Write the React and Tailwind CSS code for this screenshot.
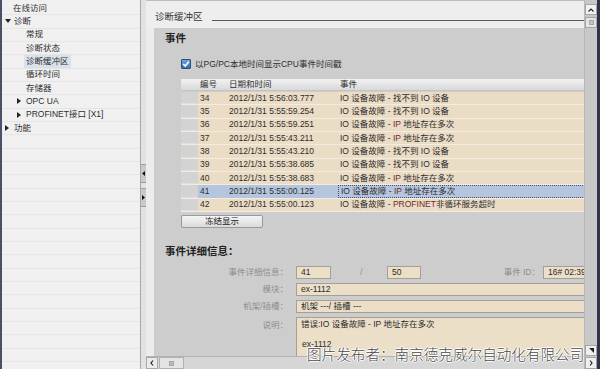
import React from "react";

const TREE = [
  { label: "在线访问", pl: 11 },
  { label: "诊断", pl: 3, arrow: "down" },
  { label: "常规", pl: 24 },
  { label: "诊断状态", pl: 24 },
  { label: "诊断缓冲区", pl: 24, active: true },
  { label: "循环时间", pl: 24 },
  { label: "存储器", pl: 24 },
  { label: "OPC UA", pl: 15, arrow: "right" },
  { label: "PROFINET接口 [X1]", pl: 15, arrow: "right" },
  { label: "功能", pl: 3, arrow: "right" },
];

const EVENTS = [
  { id: 34, time: "2012/1/31 5:56:03.777", kind: "io" },
  { id: 35, time: "2012/1/31 5:55:59.254", kind: "io" },
  { id: 36, time: "2012/1/31 5:55:59.251", kind: "ip" },
  { id: 37, time: "2012/1/31 5:55:43.211", kind: "ip" },
  { id: 38, time: "2012/1/31 5:55:43.210", kind: "io" },
  { id: 39, time: "2012/1/31 5:55:38.685", kind: "io" },
  { id: 40, time: "2012/1/31 5:55:38.683", kind: "ip" },
  { id: 41, time: "2012/1/31 5:55:00.125", kind: "ip", selected: true },
  { id: 42, time: "2012/1/31 5:55:00.123", kind: "pn" },
];

const Arrow = ({ dir }) => (
  <span className="w-[9px] flex items-center">
    {dir === "down" ? (
      <svg width="6" height="4" viewBox="0 0 6 4"><polygon points="0,0 6,0 3,4" fill="#222" /></svg>
    ) : (
      <svg width="4" height="6" viewBox="0 0 4 6"><polygon points="0,0 4,3 0,6" fill="#222" /></svg>
    )}
  </span>
);

const EventText = ({ kind }) => (
  <span>
    IO 设备故障 -{" "}
    {kind === "io" && "找不到 IO 设备"}
    {kind === "ip" && (
      <>
        <span className="text-[#6b2b2b]">IP</span> 地址存在多次
      </>
    )}
    {kind === "pn" && (
      <>
        <span className="text-[#6b2b2b]">PROFINET</span>非循环服务超时
      </>
    )}
  </span>
);

const Field = ({ children, className = "" }) => (
  <div className={`h-[13px] bg-[#ecdfc8] border border-[#a3a09a] pl-[4px] flex items-center text-[#2b2b2b] ${className}`}>
    {children}
  </div>
);

const Label = ({ children }) => (
  <div className="w-[108px] text-right text-[#8e8e8e] pr-[1px]">{children}</div>
);

export default function App() {
  return (
    <div className="relative w-[600px] h-[369px] overflow-hidden flex font-['Liberation_Sans','Noto_Sans_CJK_SC',sans-serif] text-[8.5px] text-[#2e2e2e] bg-[#f0f0f0]">
      {/* left tree */}
      <div className="w-[140px] h-full border-l-2 border-[#4a5163] bg-[#f0f0f0] pt-[2px] flex flex-col overflow-hidden">
        {TREE.map((t) => (
          <div key={t.label} className="h-[13.33px] shrink-0 flex items-center border-b border-[#e5e5e5]" style={{ paddingLeft: t.pl }}>
            {t.arrow && <Arrow dir={t.arrow} />}
            <span className={t.active ? "bg-[#d9e1eb] px-[2px] -ml-[2px]" : ""}>{t.label}</span>
          </div>
        ))}
        {Array.from({ length: 18 }).map((_, i) => (
          <div key={i} className="h-[13.33px] shrink-0 border-b border-[#e5e5e5]" />
        ))}
      </div>

      {/* splitter */}
      <div className="w-[6px] h-full bg-[#e2e2e2] border-l border-[#a8a8a8] flex flex-col items-center">
        <div className="mt-[164px] w-[5px] h-[19px] bg-[#c9c9c9] border-y border-[#9d9d9d] flex items-center justify-center">
          <svg width="3" height="5" viewBox="0 0 3 5"><polygon points="3,0 0,2.5 3,5" fill="#111" /></svg>
        </div>
        <div className="mt-[5px] w-[5px] h-[19px] bg-[#c9c9c9] border-y border-[#9d9d9d] flex items-center justify-center">
          <svg width="3" height="5" viewBox="0 0 3 5"><polygon points="0,0 3,2.5 0,5" fill="#111" /></svg>
        </div>
      </div>

      {/* main area */}
      <div className="w-[438px] h-full flex flex-col">
        <div className="h-[28px] shrink-0 bg-[#eeeeee] border-t border-[#bdbdbd] flex items-start pl-[9px] pt-[10px]">
          <span className="text-[9.5px] leading-[12px] text-[#333]">诊断缓冲区</span>
          <div className="flex-1 mt-[9px] ml-[9px] border-t border-[#5a5a5a]" />
        </div>
        <div className="flex-1 flex min-h-0">
          <div className="w-[8px] bg-[#ececec]" />
          <div className="flex-1 bg-[#cdcdcd] overflow-hidden pl-[11px]">
            <div className="mt-[3px] h-[14px] leading-[14px] text-[10.5px] font-bold text-[#222]">事件</div>
            <div className="mt-[13px] ml-[16px] h-[12px] flex items-center gap-[4px]">
              <div className="w-[10px] h-[10px] rounded-[1px] border border-[#2c4f7c] bg-gradient-to-b from-[#6ea3dc] to-[#2f6db5] flex items-center justify-center">
                <svg width="8" height="8" viewBox="0 0 8 8"><polyline points="1.2,4 3.2,6 6.8,1.8" fill="none" stroke="#fff" strokeWidth="1.6" /></svg>
              </div>
              <span>以PG/PC本地时间显示CPU事件时间戳</span>
            </div>

            {/* table */}
            <div className="mt-[9px] ml-[16px] w-[430px]">
              <div className="h-[12px] flex items-center bg-gradient-to-b from-[#f2f2f2] to-[#d9d9d9] border-b border-[#c4c4c4]">
                <div className="w-[17px]" />
                <div className="w-[29px] pl-[2px]">编号</div>
                <div className="w-[111px] pl-[2px]">日期和时间</div>
                <div className="flex-1 pl-[2px]">事件</div>
              </div>
              <div className="mt-[1px]">
                {EVENTS.map((e) => (
                  <div key={e.id} className={`h-[13.33px] flex items-stretch border-b border-[#f4ecde] ${e.selected ? "bg-[#b5c5de]" : "bg-[#eadcc5]"}`}>
                    <div className="w-[17px] bg-[#d3d3d3] border-b border-[#dedede]" />
                    <div className="w-[29px] pl-[2px] flex items-center">{e.id}</div>
                    <div className="w-[111px] pl-[2px] flex items-center">{e.time}</div>
                    <div className={`flex-1 pl-[2px] flex items-center ${e.selected ? "border border-dotted border-[#3d4f7a]" : ""}`}>
                      <EventText kind={e.kind} />
                    </div>
                  </div>
                ))}
              </div>
            </div>

            <button className="mt-[3px] ml-[16px] w-[82px] h-[13px] flex items-center justify-center rounded-[2px] border border-[#9a9a9a] bg-gradient-to-b from-[#f5f5f5] to-[#dadada] text-[8.5px] text-[#222]">
              冻结显示
            </button>

            <div className="mt-[16px] h-[14px] leading-[14px] text-[10.5px] font-bold text-[#222]">事件详细信息：</div>

            <div className="ml-[16px] w-[500px] flex flex-col gap-[4px] mt-[8px]">
              <div className="flex items-center">
                <Label>事件详细信息：</Label>
                <Field className="ml-[7px] w-[35px]">41</Field>
                <div className="w-[56px] text-center text-[#8e8e8e] pl-[5px]">/</div>
                <Field className="w-[34px]">50</Field>
                <div className="w-[119px] text-right text-[#8e8e8e]">事件 ID：</div>
                <Field className="ml-[3px] w-[80px]">16# 02:39</Field>
              </div>
              <div className="flex items-center">
                <Label>模块：</Label>
                <Field className="ml-[7px] flex-1">ex-1112</Field>
              </div>
              <div className="flex items-center">
                <Label>机架/插槽：</Label>
                <Field className="ml-[7px] flex-1">机架 ---/ 插槽 ---</Field>
              </div>
              <div className="flex items-start">
                <div className="pt-[2px]"><Label>说明：</Label></div>
                <div className="ml-[7px] flex-1 h-[50px] bg-[#ecdfc8] border border-[#a3a09a] pl-[4px] pt-[1px] leading-[11px] text-[#2b2b2b]">
                  <div>错误:IO 设备故障 - IP 地址存在多次</div>
                  <div className="mt-[9px] pl-[1px]">ex-1112</div>
                </div>
              </div>
            </div>
          </div>
        </div>
        {/* horizontal scrollbar */}
        <div className="h-[13px] shrink-0 bg-[#d6d6d6] border-t border-[#b2b2b2] flex items-stretch">
          <div className="w-[12px] bg-[#ebebeb] border border-[#a9a9a9] flex items-center justify-center">
            <svg width="4" height="6" viewBox="0 0 4 6"><polyline points="3,0.5 1,3 3,5.5" fill="none" stroke="#222" strokeWidth="1.2" /></svg>
          </div>
          <div className="ml-[1px] w-[25px] bg-[#e4e4e4] border border-[#b0b0b0] flex items-center justify-center">
            <div className="w-[5px] h-[5px] bg-[#bdbdbd] border border-[#a5a5a5]" />
          </div>
        </div>
      </div>

      {/* vertical scrollbar */}
      <div className="w-[13px] h-full bg-[#c8c8c8] border-l border-[#b8b8b8] flex flex-col items-center">
        <div className="mt-[4px] w-[12px] h-[11px] bg-[#f2f2f2] border border-[#a5a5a5] flex items-center justify-center">
          <svg width="6" height="4" viewBox="0 0 6 4"><polyline points="0.5,3.5 3,1 5.5,3.5" fill="none" stroke="#222" strokeWidth="1.2" /></svg>
        </div>
        <div className="mt-[2px] w-[12px] h-[11px] bg-[#e6e6e6] border border-[#a5a5a5] flex items-center justify-center">
          <div className="w-[5px] h-[5px] bg-[#c4c4c4] border border-[#a5a5a5]" />
        </div>
        <div className="flex-1" />
        <div className="w-[12px] h-[11px] bg-[#efefef] border border-[#a5a5a5] flex items-center justify-center">
          <svg width="6" height="6" viewBox="0 0 6 6"><polygon points="6,0 6,5 1,0" fill="#222" /></svg>
        </div>
        <div className="mt-[1px] w-[12px] h-[12px] bg-[#efefef] border border-[#a5a5a5] flex items-center justify-center">
          <svg width="4" height="6" viewBox="0 0 4 6"><polyline points="1,0.5 3,3 1,5.5" fill="none" stroke="#222" strokeWidth="1.2" /></svg>
        </div>
      </div>
      <div className="w-[3px] h-full bg-[#2f3547]" />

      {/* watermark */}
      <div className="absolute left-[307px] top-[345px] text-[14.6px] leading-[18px] font-light text-[#4a4a4a] font-['Noto_Sans_CJK_SC',sans-serif] whitespace-nowrap [text-shadow:1px_0_0_#fff,-1px_0_0_#fff,0_1px_0_#fff,0_-1px_0_#fff]">
        图片发布者：南京德克威尔自动化有限公司
      </div>
    </div>
  );
}
